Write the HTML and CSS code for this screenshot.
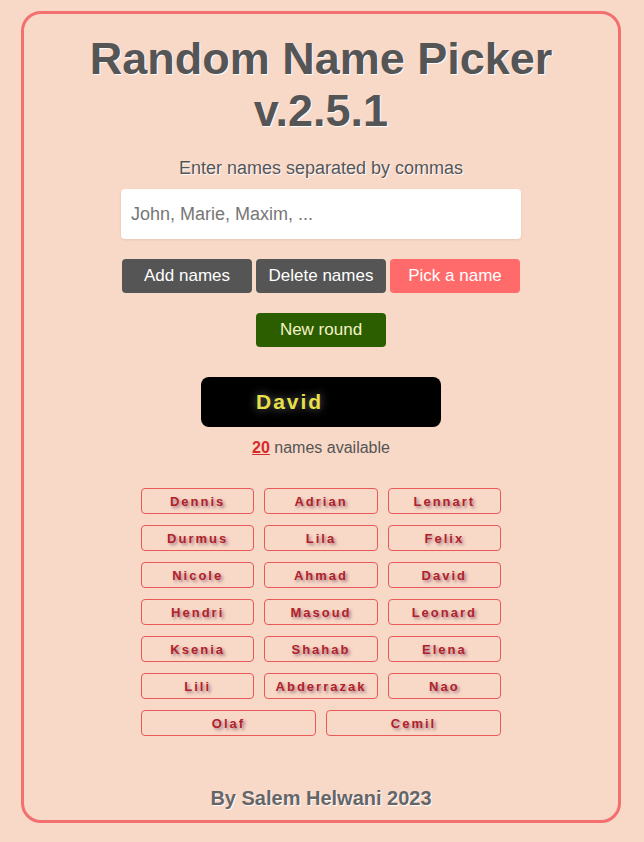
FILE: index.html
```html
<!DOCTYPE html>
<html lang="en">
<head>
<meta charset="utf-8">
<title>Random Name Picker</title>
<link rel="stylesheet" href="styles.css">
</head>
<body>
<main class="card">
  <h1 class="title">Random Name Picker v.2.5.1</h1>
  <p class="hint">Enter names separated by commas</p>
  <input class="names-input" type="text" placeholder="John, Marie, Maxim, ...">
  <div class="actions">
    <button class="btn btn-dark">Add names</button>
    <button class="btn btn-dark">Delete names</button>
    <button class="btn btn-pink">Pick a name</button>
  </div>
  <div class="actions">
    <button class="btn btn-green">New round</button>
  </div>
  <div class="display"><span class="picked">David</span></div>
  <p class="count"><span class="count-num">20</span> names available</p>
  <div class="names">
    <span class="name">Dennis</span>
    <span class="name">Adrian</span>
    <span class="name">Lennart</span>
    <span class="name">Durmus</span>
    <span class="name">Lila</span>
    <span class="name">Felix</span>
    <span class="name">Nicole</span>
    <span class="name">Ahmad</span>
    <span class="name">David</span>
    <span class="name">Hendri</span>
    <span class="name">Masoud</span>
    <span class="name">Leonard</span>
    <span class="name">Ksenia</span>
    <span class="name">Shahab</span>
    <span class="name">Elena</span>
    <span class="name">Lili</span>
    <span class="name">Abderrazak</span>
    <span class="name">Nao</span>
    <span class="name">Olaf</span>
    <span class="name">Cemil</span>
  </div>
  <footer class="footer">By Salem Helwani 2023</footer>
</main>
</body>
</html>
```

FILE: styles.css
```css
* { box-sizing: border-box; }

html, body {
  background: #f8d8c6;
}

body {
  margin: 0;
  padding: 11px 0 19px;
  font-family: "Liberation Sans", Arial, sans-serif;
  color: #555;
}

.card {
  width: 600px;
  margin: 0 0 0 21px;
  border: 3px solid #f46f6f;
  border-radius: 20px;
  display: flex;
  flex-direction: column;
  align-items: center;
  padding: 19px 0 0;
  height: 812px;
}

.title {
  margin: 0;
  width: 480px;
  text-align: center;
  font-size: 45px;
  line-height: 52px;
  font-weight: 700;
  color: #555;
  text-shadow: 1px 1px 1px #fff;
}

.hint {
  margin: 21px 0 0;
  font-size: 18px;
  line-height: 21px;
  color: #555;
  text-shadow: 1px 1px 1px #fff;
}

.names-input {
  margin-top: 10px;
  width: 400px;
  height: 50px;
  border: none;
  border-radius: 4px;
  background: #fff;
  padding: 0 10px;
  font-family: "Liberation Sans", Arial, sans-serif;
  font-size: 18px;
  color: #333;
  box-shadow: 0 1px 3px rgba(0,0,0,0.08);
}

.names-input::placeholder {
  color: #767676;
}

.actions {
  margin-top: 20px;
  display: flex;
  gap: 4px;
  justify-content: center;
}

.btn {
  width: 130px;
  height: 34px;
  border: none;
  border-radius: 4px;
  font-family: "Liberation Sans", Arial, sans-serif;
  font-size: 17px;
  color: #fff;
  padding: 0;
}

.btn-dark { background: #555; }
.btn-pink { background: #ff6b6b; }
.btn-green { background: #2c5e00; color: #f3f3c8; }

.display {
  margin-top: 30px;
  width: 240px;
  height: 50px;
  background: #000;
  border-radius: 8px;
  display: flex;
  align-items: center;
  padding-left: 55px;
}

.picked {
  font-size: 21px;
  font-weight: 700;
  letter-spacing: 2px;
  color: #e8e04a;
  text-shadow: 0 0 10px rgba(255,255,255,0.45);
}

.count {
  margin: 12px 0 0;
  font-size: 16px;
  line-height: 18px;
  color: #555;
}

.count-num {
  color: #d42a2a;
  font-weight: 700;
  text-decoration: underline;
}

.names {
  margin-top: 31px;
  width: 360px;
  display: flex;
  flex-wrap: wrap;
  gap: 11px 10px;
}

.name {
  flex: 1 1 100px;
  height: 26px;
  border: 1px solid #e85a5a;
  border-radius: 4px;
  display: flex;
  align-items: center;
  justify-content: center;
  font-size: 13px;
  font-weight: 700;
  letter-spacing: 2px;
  color: #b0222a;
  text-shadow: 2px 2px 3px rgba(110,50,90,0.55);
}

.footer {
  margin-top: auto;
  margin-bottom: 10px;
  font-size: 20px;
  line-height: 23px;
  font-weight: 700;
  color: #666;
  text-shadow: 1px 1px 1px #fff;
}
```
